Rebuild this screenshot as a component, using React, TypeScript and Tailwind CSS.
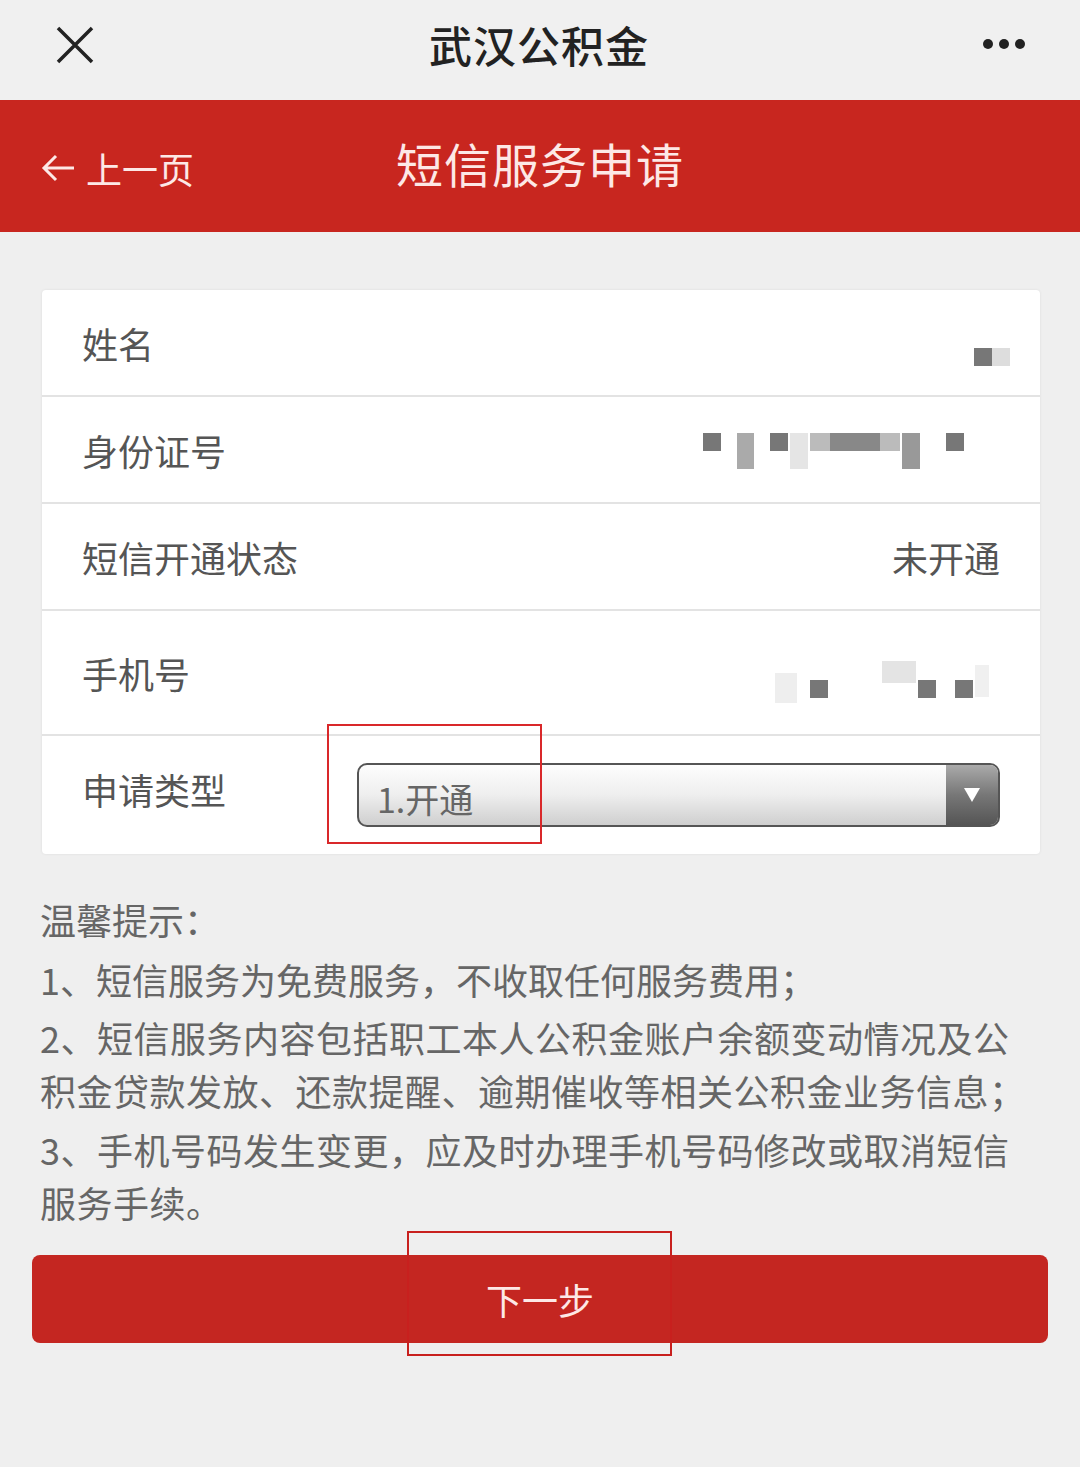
const cjk = { fontFamily: '"Noto Sans CJK SC", "Noto Sans", sans-serif' };

// blurred / redacted value placeholder
const Pixels = ({ blocks }: { blocks: { x: number; y: number; w: number; h: number; c: string }[] }) => (
  <div className="relative h-[50px] w-[320px]">
    {blocks.map((b, i) => (
      <div
        key={i}
        className="absolute"
        style={{ left: b.x, top: b.y, width: b.w, height: b.h, background: b.c }}
      />
    ))}
  </div>
);

const Row = ({ label, children, tall }: { label: string; children?: React.ReactNode; tall?: boolean }) => (
  <div
    className={`flex items-center justify-between border-b-2 border-[#e3e3e3] pl-[40px] pr-[40px] ${
      tall ? 'h-[125px]' : 'h-[107px]'
    }`}
  >
    <span className="text-[36px] text-[#555]">{label}</span>
    {children}
  </div>
);

export default function App() {
  return (
    <div className="min-h-[1467px] w-[1080px] bg-[#efefef]" style={cjk}>
      {/* top nav */}
      <div className="flex h-[100px] items-center justify-between bg-[#f0f0f0] px-[55px]">
        <svg width="40" height="40" viewBox="0 0 40 40" className="mt-[-10px]">
          <path d="M3 3L37 37M37 3L3 37" stroke="#222" strokeWidth="3.5" />
        </svg>
        <span className="mt-[-12px] text-[43px] font-medium tracking-[1px] text-[#222]">武汉公积金</span>
        <div className="mt-[-12px] flex gap-[6px]">
          <span className="h-[10px] w-[10px] rounded-full bg-[#222]" />
          <span className="h-[10px] w-[10px] rounded-full bg-[#222]" />
          <span className="h-[10px] w-[10px] rounded-full bg-[#222]" />
        </div>
      </div>

      {/* red header */}
      <div className="relative flex h-[132px] items-center bg-[#c8261f] px-[40px]">
        <div className="flex items-center gap-[10px] pt-[4px] text-[#fde8e6]">
          <svg width="36" height="30" viewBox="0 0 36 30">
            <path d="M34 15H4M16 3L4 15L16 27" stroke="#fde8e6" strokeWidth="3" fill="none" />
          </svg>
          <span className="text-[36px]">上一页</span>
        </div>
        <span className="absolute left-0 right-0 top-[28px] text-center text-[47px] tracking-[1px] text-[#fde8e6]">
          短信服务申请
        </span>
      </div>

      {/* form card */}
      <div className="mx-[42px] mt-[58px] w-[998px] overflow-hidden rounded-[4px] bg-white shadow-[0_0_3px_rgba(0,0,0,0.08)]">
        <Row label="姓名">
          <div className="mt-[28px] mr-[-10px] flex">
            <div className="h-[18px] w-[18px] bg-[#777]" />
            <div className="h-[18px] w-[18px] bg-[#ddd]" />
          </div>
        </Row>
        <Row label="身份证号">
          <Pixels
            blocks={[
              { x: 23, y: 8, w: 18, h: 18, c: '#777' },
              { x: 57, y: 8, w: 17, h: 36, c: '#aaa' },
              { x: 90, y: 8, w: 18, h: 18, c: '#777' },
              { x: 110, y: 8, w: 18, h: 36, c: '#e5e5e5' },
              { x: 130, y: 8, w: 20, h: 18, c: '#bbb' },
              { x: 150, y: 8, w: 50, h: 18, c: '#888' },
              { x: 200, y: 8, w: 20, h: 18, c: '#bbb' },
              { x: 222, y: 8, w: 18, h: 36, c: '#999' },
              { x: 266, y: 8, w: 18, h: 18, c: '#777' },
            ]}
          />
        </Row>
        <Row label="短信开通状态">
          <span className="text-[36px] text-[#555]">未开通</span>
        </Row>
        <Row label="手机号" tall>
          <div className="mt-[34px]">
            <Pixels
              blocks={[
                { x: 95, y: 8, w: 22, h: 30, c: '#eee' },
                { x: 130, y: 15, w: 18, h: 18, c: '#777' },
                { x: 202, y: -4, w: 34, h: 22, c: '#e4e4e4' },
                { x: 238, y: 15, w: 18, h: 18, c: '#777' },
                { x: 275, y: 15, w: 18, h: 18, c: '#777' },
                { x: 295, y: 0, w: 14, h: 32, c: '#f0f0f0' },
              ]}
            />
          </div>
        </Row>
        <div className="flex h-[118px] items-center pl-[40px] pr-[40px]">
          <span className="mt-[-12px] w-[275px] text-[36px] text-[#555]">申请类型</span>
          <div className="relative flex h-[64px] flex-1 items-center overflow-hidden rounded-[10px] border-2 border-[#555] bg-gradient-to-b from-[#fdfdfd] via-[#eee] to-[#cfcfcf]">
            <span className="pl-[18px] pt-[6px] text-[34px] text-[#666]">1.开通</span>
            <div className="absolute bottom-0 right-0 top-0 flex w-[52px] items-center justify-center bg-gradient-to-b from-[#aaa] via-[#777] to-[#555]">
              <svg width="16" height="14" viewBox="0 0 16 14">
                <path d="M0 0H16L8 14Z" fill="#fff" />
              </svg>
            </div>
          </div>
        </div>
      </div>

      {/* tips */}
      <div className="mt-[37px] px-[40px] text-[36px] leading-[56px] text-[#666]">
        <p className="mb-[4px]">温馨提示：</p>
        <p className="mb-[4px]">1、短信服务为免费服务，不收取任何服务费用；</p>
        <p className="mb-[6px] leading-[53px] tracking-[0.5px]">
          2、短信服务内容包括职工本人公积金账户余额变动情况及公
          <br />
          积金贷款发放、还款提醒、逾期催收等相关公积金业务信息；
        </p>
        <p className="leading-[53px] tracking-[0.5px]">
          3、手机号码发生变更，应及时办理手机号码修改或取消短信
          <br />
          服务手续。
        </p>
      </div>

      {/* button */}
      <div className="mx-[32px] mt-[26px] flex h-[88px] items-center justify-center rounded-[8px] bg-[#c42621]">
        <span className="text-[36px] text-[#fde8e6]">下一步</span>
      </div>

      {/* annotation boxes */}
      <div className="absolute left-[327px] top-[724px] h-[120px] w-[215px] border-2 border-[#d9282a]" />
      <div className="absolute left-[407px] top-[1231px] h-[125px] w-[265px] border-2 border-[#c8201e]" />
    </div>
  );
}
